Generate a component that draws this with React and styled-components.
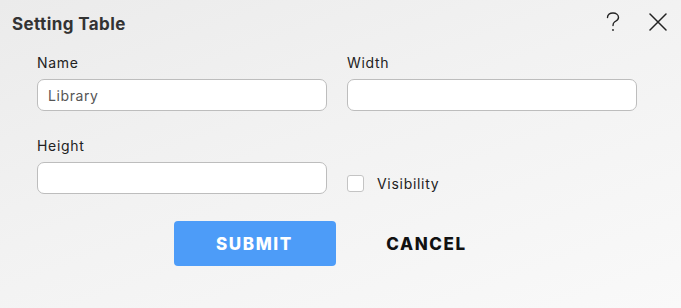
import React, { useState } from 'react';
import styled, { createGlobalStyle } from 'styled-components';

const GlobalStyle = createGlobalStyle`
  html, body {
    margin: 0;
    padding: 0;
  }
  body {
    font-family: Inter, "Noto Sans", sans-serif;
  }
`;

export default function App() {
  const [name, setName] = useState('Library');
  const [width, setWidth] = useState('');
  const [height, setHeight] = useState('');
  const [visible, setVisible] = useState(false);

  return (
    <Dialog>
      <GlobalStyle />
      <Header>
        <Title>Setting Table</Title>
        <IconGroup>
          <IconBtn aria-label="help">
            <svg width="16" height="20" viewBox="0 0 16 20" fill="none" stroke="#222" strokeWidth="1.4" strokeLinecap="round">
              <path d="M2.5 5.5 C2.5 2.5 5 1 8 1 C11 1 13.5 2.8 13.5 5.4 C13.5 8 11 9 9.5 10 C8.3 10.8 8 11.6 8 13.5" />
              <circle cx="8" cy="18" r="0.9" fill="#222" stroke="none" />
            </svg>
          </IconBtn>
          <IconBtn aria-label="close">
            <svg width="18" height="18" viewBox="0 0 18 18" fill="none" stroke="#222" strokeWidth="1.5" strokeLinecap="round">
              <path d="M1 1 L17 17 M17 1 L1 17" />
            </svg>
          </IconBtn>
        </IconGroup>
      </Header>

      <Form>
        <Field>
          <Label>Name</Label>
          <Input value={name} onChange={e => setName(e.target.value)} />
        </Field>
        <Field>
          <Label>Width</Label>
          <Input value={width} onChange={e => setWidth(e.target.value)} />
        </Field>
        <Field>
          <Label>Height</Label>
          <Input value={height} onChange={e => setHeight(e.target.value)} />
        </Field>
        <CheckRow>
          <Check checked={visible} onClick={() => setVisible(!visible)} />
          <CheckLabel>Visibility</CheckLabel>
        </CheckRow>
      </Form>

      <Actions>
        <Button primary>SUBMIT</Button>
        <Button>CANCEL</Button>
      </Actions>
    </Dialog>
  );
}

const Dialog = styled.div`
  width: 681px;
  height: 308px;
  box-sizing: border-box;
  background: linear-gradient(160deg, #ebebeb 0%, #f2f2f2 45%, #f9f9f9 100%);
  color: #222;
  overflow: hidden;
`;

const Header = styled.div`
  display: flex;
  align-items: center;
  justify-content: space-between;
  height: 44px;
  padding: 0 14px 0 12px;
`;

const Title = styled.h1`
  margin: 3px 0 0;
  font-size: 17px;
  font-weight: 700;
  letter-spacing: 0.4px;
  color: #333;
`;

const IconGroup = styled.div`
  display: flex;
  align-items: center;
  gap: 28px;
`;

const IconBtn = styled.button`
  display: flex;
  align-items: center;
  justify-content: center;
  padding: 0;
  border: none;
  background: none;
  cursor: pointer;
`;

const Form = styled.div`
  display: grid;
  grid-template-columns: 290px 290px;
  column-gap: 20px;
  row-gap: 26px;
  padding: 10px 0 0 37px;
`;

const Field = styled.div`
  display: flex;
  flex-direction: column;
  gap: 8px;
`;

const Label = styled.label`
  font-size: 14px;
  line-height: 17px;
  letter-spacing: 0.7px;
  color: #222;
`;

const Input = styled.input`
  box-sizing: border-box;
  width: 290px;
  height: 32px;
  padding: 0 10px;
  border: 1px solid #bdbdbd;
  border-radius: 7px;
  background: #fff;
  font-family: Inter, "Noto Sans", sans-serif;
  font-size: 14px;
  letter-spacing: 0.6px;
  color: #555;
  outline: none;
`;

const CheckRow = styled.div`
  display: flex;
  align-items: center;
  gap: 13px;
  align-self: end;
  padding-bottom: 2px;
`;

const Check = styled.span`
  box-sizing: border-box;
  width: 17px;
  height: 17px;
  border: 1px solid #c4c4c4;
  border-radius: 3px;
  background: ${p => (p.checked ? '#4d9cf8' : '#fff')};
  cursor: pointer;
`;

const CheckLabel = styled.span`
  font-size: 14px;
  letter-spacing: 0.7px;
  color: #222;
`;

const Actions = styled.div`
  display: flex;
  justify-content: center;
  gap: 10px;
  padding-top: 27px;
`;

const Button = styled.button`
  width: 162px;
  height: 45px;
  border: none;
  border-radius: 4px;
  background: ${p => (p.primary ? '#4d9cf8' : 'transparent')};
  color: ${p => (p.primary ? '#fff' : '#111')};
  font-family: Inter, "Noto Sans", sans-serif;
  font-size: 17px;
  font-weight: 800;
  letter-spacing: 1.6px;
  cursor: pointer;
`;
